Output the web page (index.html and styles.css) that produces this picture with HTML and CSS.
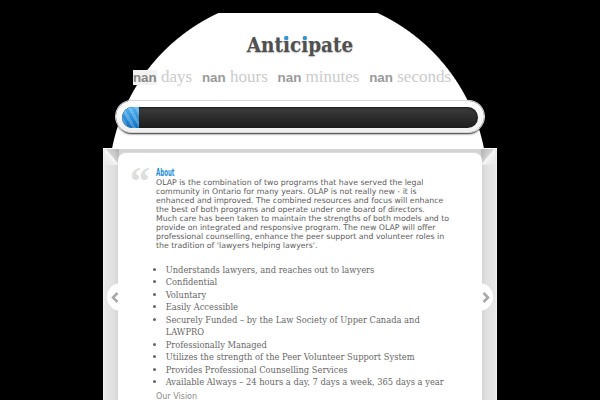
FILE: index.html
```html
<!DOCTYPE html>
<html lang="en">
<head>
<meta charset="utf-8">
<title>Anticipate</title>
<link rel="stylesheet" href="styles.css">
</head>
<body>
<header class="hero">
  <h1 class="logo">Ant<span class="dot-i">i</span>c<span class="dot-i">i</span>pate</h1>
  <div class="countdown">
    <span class="unit"><b class="num first">nan</b> days</span>
    <span class="unit"><b class="num">nan</b> hours</span>
    <span class="unit"><b class="num">nan</b> minutes</span>
    <span class="unit"><b class="num">nan</b> seconds</span>
  </div>
  <div class="progress"><div class="track"><div class="fill" style="width:17px"></div></div></div>
</header>
<main class="panel">
  <section class="card">
    <a class="nav prev" href="#"><svg width="8" height="11" viewBox="0 0 8 11"><polyline points="6.5,1 2,5.5 6.5,10" fill="none" stroke="#a9a9a9" stroke-width="2.6"/></svg></a>
    <a class="nav next" href="#"><svg width="8" height="11" viewBox="0 0 8 11"><polyline points="1.5,1 6,5.5 1.5,10" fill="none" stroke="#a9a9a9" stroke-width="2.6"/></svg></a>
    <div class="quote">&ldquo;</div>
    <div class="content">
      <h2 class="title">About</h2>
      <p class="text">OLAP is the combination of two programs that have served the legal<br>community in Ontario for many years. OLAP is not really new - it is<br>enhanced and improved. The combined resources and focus will enhance<br>the best of both programs and operate under one board of directors.<br>Much care has been taken to maintain the strengths of both models and to<br>provide on integrated and responsive program. The new OLAP will offer<br>professional counselling, enhance the peer support and volunteer roles in<br>the tradition of 'lawyers helping lawyers'.</p>
      <ul class="points">
        <li>Understands lawyers, and reaches out to lawyers</li>
        <li>Confidential</li>
        <li>Voluntary</li>
        <li>Easily Accessible</li>
        <li>Securely Funded – by the Law Society of Upper Canada and<br>LAWPRO</li>
        <li>Professionally Managed</li>
        <li>Utilizes the strength of the Peer Volunteer Support System</li>
        <li>Provides Professional Counselling Services</li>
        <li>Available Always – 24 hours a day, 7 days a week, 365 days a year</li>
      </ul>
      <p class="sub">Our Vision</p>
    </div>
  </section>
</main>
</body>
</html>
```
FILE: styles.css
```css
* { box-sizing: border-box; }
html, body { margin: 0; }
body {
  background: #000;
  padding-top: 13px;
  width: 600px;
  height: 400px;
  overflow: hidden;
  font-family: "DejaVu Sans", sans-serif;
}
.hero {
  height: 135px;
  padding-top: 19.7px;
  text-align: center;
  background: radial-gradient(circle 190px at 298px 172px, #fff 189px, rgba(255,255,255,0) 190px);
}
.logo {
  margin: 0;
  font: bold 20.5px/24px "DejaVu Serif Condensed", "DejaVu Serif", serif;
  color: #505050;
  text-shadow: 0 1px 1px rgba(0,0,0,.25);
}
.dot-i { position: relative; }
.dot-i::after {
  content: "";
  position: absolute;
  left: 50%;
  top: 0.16em;
  width: 4px;
  height: 4px;
  margin-left: -2px;
  border-radius: 50%;
  background: #2a9be2;
}
.countdown {
  margin-top: 10.5px;
  padding-right: 16px;
  font: 17px/20px "Liberation Serif", serif;
  color: #cbcbcb;
  white-space: nowrap;
}
.unit + .unit { margin-left: 5.5px; }
.num {
  font: bold 13.4px "Liberation Sans", sans-serif;
  color: #9a9a9a;
}
.num.first { color: #888; background: #f2f2f2; }
.progress {
  width: 368px;
  height: 31px;
  margin: 13.8px auto 0;
  padding: 6px 6px 4px;
  border-radius: 16px;
  background: linear-gradient(#fff, #f0f0f0);
  box-shadow: 0 0 0 1px #d6d6d6, 0 3px 2px -1px rgba(0,0,0,.85);
}
.track {
  height: 21px;
  border-radius: 10.5px;
  overflow: hidden;
  background: linear-gradient(#3d3d3d, #1c1c1c);
  box-shadow: inset 0 1px 2px rgba(0,0,0,.6);
}
.fill {
  height: 100%;
  background:
    repeating-linear-gradient(60deg, rgba(255,255,255,0) 0 3px, rgba(255,255,255,.22) 3px 6px),
    linear-gradient(#52b4f2, #0e6fc2);
}
.panel {
  position: relative;
  width: 394px;
  height: 252px;
  margin: 0 auto;
  padding: 4px 15px 0;
  background: linear-gradient(to right, #f4f4f4 0, #e6e6e6 2px, #e0e0e0 11px, #d4d4d4 15px, #d4d4d4 379px, #e0e0e0 383px, #e6e6e6 392px, #f4f4f4 394px);
  border-top: 1px solid #fff;
}
.panel::before, .panel::after {
  content: "";
  position: absolute;
  top: 0;
  width: 14px;
  height: 16px;
}
.panel::before {
  left: 2px;
  background: linear-gradient(to bottom left, rgba(0,0,0,.16) 0, rgba(0,0,0,.07) 45%, rgba(255,255,255,.7) 50%, rgba(255,255,255,0) 100%);
}
.panel::after {
  right: 2px;
  background: linear-gradient(to bottom right, rgba(0,0,0,.16) 0, rgba(0,0,0,.07) 45%, rgba(255,255,255,.7) 50%, rgba(255,255,255,0) 100%);
}
.card {
  position: relative;
  z-index: 1;
  display: flex;
  height: 248px;
  padding: 12.7px 12px 0;
  background: #fff;
  border-radius: 8px 8px 0 0;
  box-shadow: 0 -1px 0 #dcdcdc;
}
.nav {
  position: absolute;
  top: 130px;
  width: 28px;
  height: 28px;
  border-radius: 50%;
  background: #fff;
  display: flex;
  align-items: center;
}
.prev { left: -11px; padding-left: 4px; }
.next { right: -11px; justify-content: flex-end; padding-right: 3px; }
.quote {
  flex: none;
  width: 26px;
  margin-top: -3.7px;
  font: bold 40px/40px "Liberation Serif", serif;
  color: #dedede;
}
.content { flex: 1; min-width: 0; }
.title {
  margin: 0;
  font: bold 10.5px/12px "DejaVu Sans Condensed", "DejaVu Sans", sans-serif;
  color: #1f8fdc;
  transform: scaleX(.58);
  transform-origin: left;
}
.text {
  margin: 1.8px 0 0;
  font-size: 7.8px;
  line-height: 8.9px;
  color: #5c5c5c;
  white-space: nowrap;
}
.points {
  margin: 13.2px 0 0;
  padding-left: 9.7px;
  font: 9.25px/12.5px "DejaVu Serif Condensed", "DejaVu Serif", serif;
  color: #666;
  white-space: nowrap;
}
.sub {
  margin: 3.3px 0 0;
  font-size: 8px;
  line-height: 10px;
  color: #8a8a8a;
}
```
